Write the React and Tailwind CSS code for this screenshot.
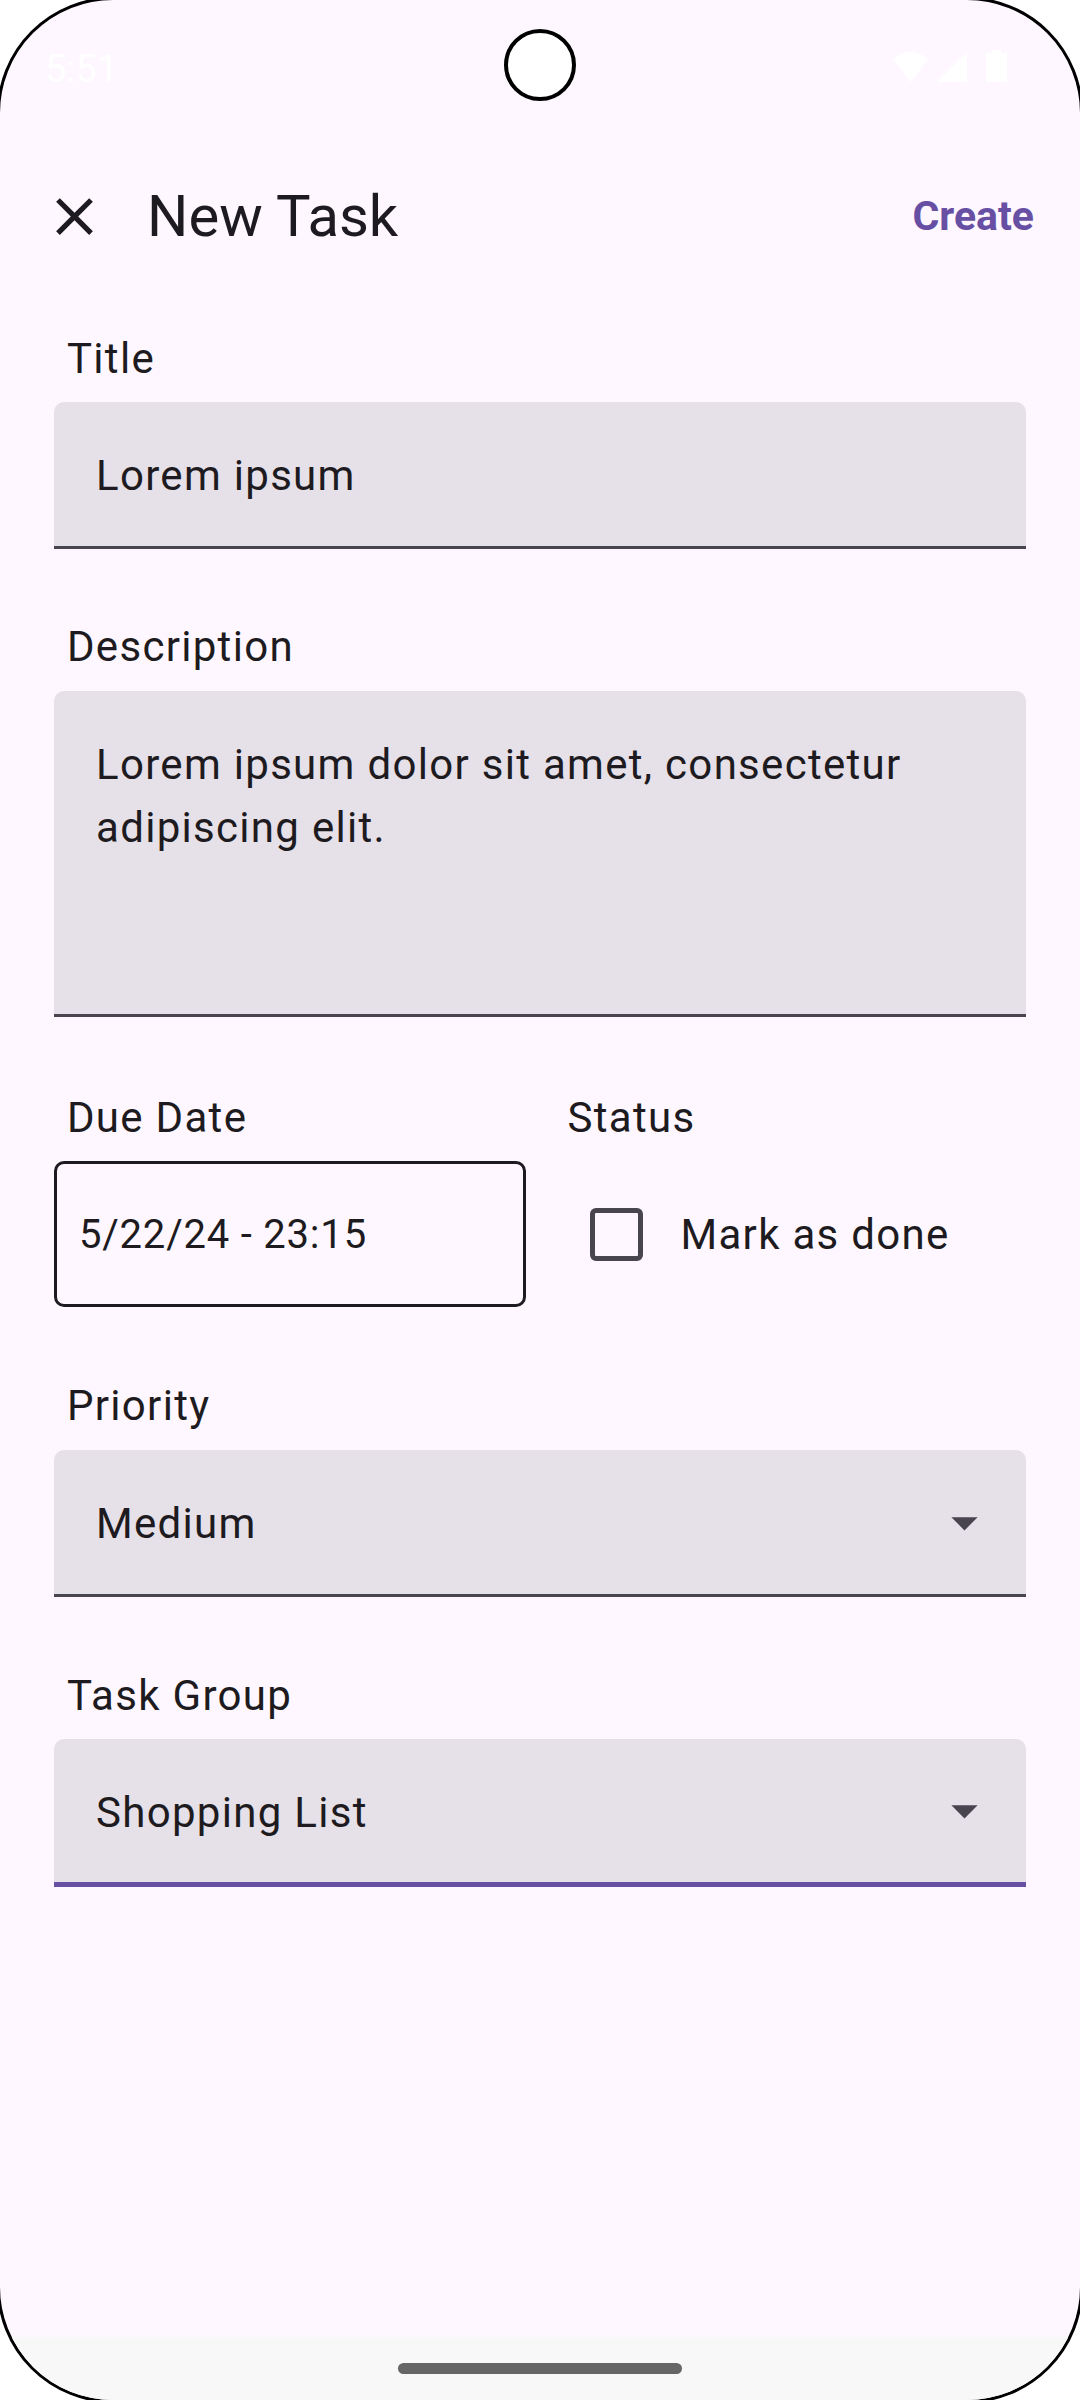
import React from "react";

function StatusBar() {
  return (
    <div className="flex h-[132px] shrink-0 items-start">
      <span className="ml-[45px] mt-[50px] text-[38px] leading-[38px] text-white">5:51</span>
      <div className="ml-auto mr-[73px] mt-[50px] flex items-end">
        <svg width="35" height="30" viewBox="0 0 35 30" className="fill-white">
          <path d="M0 7 Q17.5 -7 35 7 L17.5 30 Z" />
        </svg>
        <svg width="30" height="30" viewBox="0 0 30 30" className="ml-[9px] fill-white">
          <path d="M30 0 V30 H0 Z" />
        </svg>
        <svg width="21" height="32" viewBox="0 0 21 32" className="ml-[19px] fill-white">
          <path d="M6 0 h9 v3 h6 v29 h-21 v-29 h6 z" />
        </svg>
      </div>
    </div>
  );
}

function AppBar() {
  return (
    <div className="flex h-[168px] shrink-0 items-center">
      <svg width="63" height="63" viewBox="0 0 24 24" className="ml-[43px] fill-[#1d1b20]">
        <path d="M19 6.41L17.59 5 12 10.59 6.41 5 5 6.41 10.59 12 5 17.59 6.41 19 12 13.41 17.59 19 19 17.59 13.41 12z" />
      </svg>
      <h1 className="ml-[41px] text-[58px] leading-[58px] text-[#1d1b20]">New Task</h1>
      <button className="ml-auto mr-[46px] text-[41px] font-bold leading-[41px] text-[#6750a4]">
        Create
      </button>
    </div>
  );
}

function Label({ children, className = "" }) {
  return (
    <div className={"pl-[13px] text-[42px] leading-[50px] tracking-[1.3px] text-[#1d1b20] " + className}>
      {children}
    </div>
  );
}

function DropArrow() {
  return (
    <svg width="63" height="63" viewBox="0 0 24 24" className="fill-[#49454f]">
      <path d="M7 10l5 5 5-5z" />
    </svg>
  );
}

export default function App() {
  return (
    <div className="relative h-[2400px] w-[1080px] overflow-hidden bg-white font-['Roboto',sans-serif] text-[#1d1b20]">
      <div className="-m-[3px] flex h-[2406px] w-[1086px] flex-col overflow-hidden rounded-[116px] border-[3px] border-black bg-[#fef7ff]">
        <StatusBar />
        <AppBar />

        <div className="flex flex-1 flex-col px-[54px]">
          <Label className="mt-[34px]">Title</Label>
          <div className="mt-[18px] flex h-[147px] items-center rounded-t-[10px] border-b-[3px] border-[#49454f] bg-[#e6e0e9] pl-[42px] pt-[3px] text-[42px] leading-[63px] tracking-[1.3px]">
            Lorem ipsum
          </div>

          <Label className="mt-[73px]">Description</Label>
          <div className="mt-[19px] h-[326px] rounded-t-[10px] border-b-[3px] border-[#49454f] bg-[#e6e0e9] pl-[42px] pr-[36px] pt-[42px] text-[42px] leading-[63px] tracking-[1.3px]">
            Lorem ipsum dolor sit amet, consectetur adipiscing elit.
          </div>

          <div className="mt-[76px] grid grid-cols-2 gap-x-[29px]">
            <div>
              <Label>Due Date</Label>
              <div className="mt-[18px] flex h-[146px] items-center rounded-[10px] border-[3px] border-[#1d1b20] pl-[22px] pt-[2px] text-[40px] tracking-[0.8px]">
                5/22/24 - 23:15
              </div>
            </div>
            <div>
              <Label>Status</Label>
              <div className="mt-[18px] flex h-[146px] items-center pl-[35px]">
                <div className="h-[53px] w-[53px] rounded-[6px] border-[5px] border-[#49454f]" />
                <span className="ml-[38px] pt-[2px] text-[42px] leading-[50px] tracking-[1.3px]">Mark as done</span>
              </div>
            </div>
          </div>

          <Label className="mt-[74px]">Priority</Label>
          <div className="mt-[19px] flex h-[147px] items-center justify-between rounded-t-[10px] border-b-[3px] border-[#49454f] bg-[#e6e0e9] pl-[42px] pr-[30px] text-[42px] leading-[63px] tracking-[1.3px]">
            <span className="pt-[3px]">Medium</span>
            <DropArrow />
          </div>

          <Label className="mt-[74px]">Task Group</Label>
          <div className="mt-[18px] flex h-[148px] items-center justify-between rounded-t-[10px] border-b-[5px] border-[#6750a4] bg-[#e6e0e9] pl-[42px] pr-[30px] text-[42px] leading-[63px] tracking-[1.3px]">
            <span className="pt-[3px]">Shopping List</span>
            <DropArrow />
          </div>
        </div>

        <div className="flex h-[63px] shrink-0 justify-center bg-[#f7f8f7] pt-[26px]">
          <div className="h-[11px] w-[284px] rounded-full bg-[#666666]" />
        </div>
      </div>

      <div className="absolute left-[504px] top-[29px] h-[72px] w-[72px] rounded-full border-4 border-black bg-white" />
    </div>
  );
}
